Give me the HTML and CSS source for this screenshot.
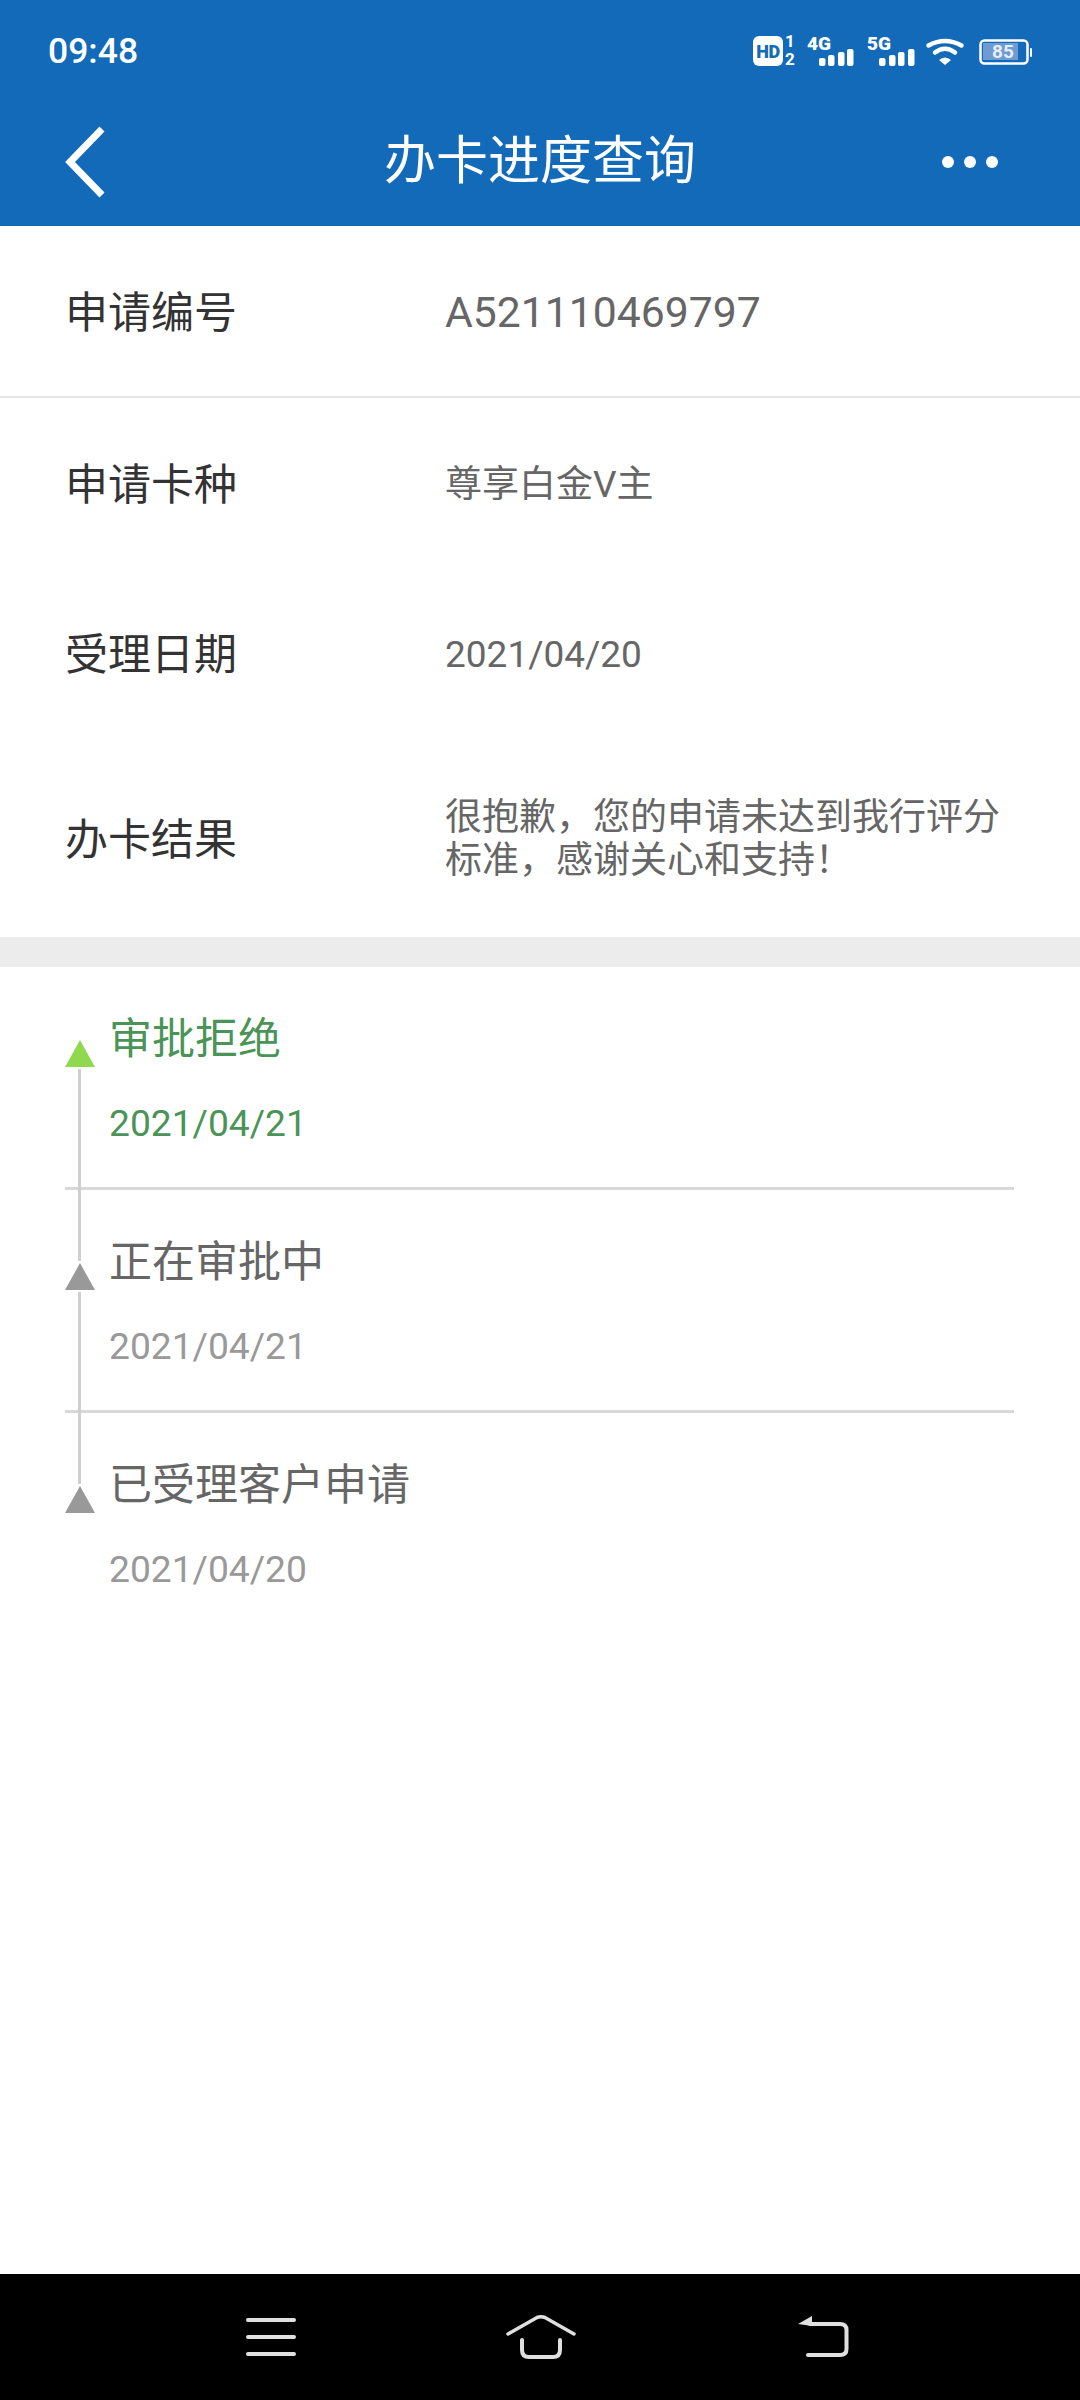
FILE: index.html
```html
<!DOCTYPE html>
<html lang="zh-CN">
<head>
  <meta charset="UTF-8" />
  <meta name="viewport" content="width=device-width, initial-scale=1.0"/>
  <title>办卡进度查询</title>
  <link rel="stylesheet" href="styles.css">
</head>
<body>

<div class="screen">
  <header class="top">
    <div class="status-bar">
      <span class="clock">09:48</span>
      <svg class="status-icons" width="279" height="44" viewBox="0 -10 279 44">
        <!-- HD + sim numbers -->
        <rect x="0" y="0" width="30" height="30" rx="6" fill="#fff"/>
        <text x="15" y="22" class="hd-text">HD</text>
        <text x="37" y="11" class="sim-text">1</text>
        <text x="37" y="29" class="sim-text">2</text>

        <!-- 4G -->
        <text x="54" y="14" class="net-text">4G</text>
        <rect x="66" y="22" width="6.500" height="8" rx="2" fill="#fff"/>
        <rect x="75" y="19" width="6.500" height="11" rx="2" fill="#fff"/>
        <rect x="85" y="16" width="6.500" height="14" rx="2" fill="#fff"/>
        <rect x="94" y="13" width="6.500" height="17" rx="2" fill="#fff"/>

        <!-- 5G -->
        <text x="114" y="14" class="net-text">5G</text>
        <rect x="126" y="22" width="6.500" height="8" rx="2" fill="#fff"/>
        <rect x="136" y="19" width="6.500" height="11" rx="2" fill="#fff"/>
        <rect x="145" y="16" width="6.500" height="14" rx="2" fill="#fff"/>
        <rect x="155" y="13" width="6.500" height="17" rx="2" fill="#fff"/>

        <!-- wifi -->
        <path d="M175.500 9.500 Q192 0.500 208.500 9.500" fill="none" stroke="#fff" stroke-width="4.500" stroke-linecap="round"/>
        <path d="M182 16.500 Q192 9 202 16.500" fill="none" stroke="#fff" stroke-width="4.500" stroke-linecap="round"/>
        <path d="M186 24 Q192 19 198 24 L192 29 Z" fill="#fff"/>

        <!-- battery -->
        <rect x="227.500" y="4.500" width="47" height="23" rx="4" fill="none" stroke="#fff" stroke-width="2.500"/>
        <rect x="230" y="7" width="35" height="17" fill="#6f9bd3"/>
        <rect x="277" y="12" width="2" height="9" rx="1" fill="#fff"/>
        <text x="250" y="22" class="bat-text">85</text>
      </svg>
    </div>
    <div class="nav-bar">
      <svg class="back" width="42" height="72" viewBox="0 0 42 72">
        <path d="M37 3 L5 36 L37 69" fill="none" stroke="#fff" stroke-width="7"/>
      </svg>
      <h1 class="title">办卡进度查询</h1>
      <div class="dots"><i></i><i></i><i></i></div>
    </div>
  </header>

  <section class="info">
    <div class="row row-first">
      <div class="label">申请编号</div>
      <div class="value value-big">A521110469797</div>
    </div>
    <div class="row">
      <div class="label">申请卡种</div>
      <div class="value">尊享白金V主</div>
    </div>
    <div class="row">
      <div class="label">受理日期</div>
      <div class="value">2021/04/20</div>
    </div>
    <div class="row row-last">
      <div class="label">办卡结果</div>
      <div class="value">很抱歉，您的申请未达到我行评分标准，感谢关心和支持！</div>
    </div>
  </section>

  <div class="gap"></div>

  <section class="timeline">
    <div class="step step-active">
      <div class="step-title">审批拒绝</div>
      <div class="step-date">2021/04/21</div>
    </div>
    <div class="step">
      <div class="step-title">正在审批中</div>
      <div class="step-date">2021/04/21</div>
    </div>
    <div class="step step-end">
      <div class="step-title">已受理客户申请</div>
      <div class="step-date">2021/04/20</div>
    </div>
  </section>

  <footer class="sys-nav">
    <svg class="sys-menu" width="50" height="38" viewBox="0 0 50 38">
      <path d="M2 2 H48 M2 19 H48 M2 36 H48" stroke="#e0e0e0" stroke-width="4" stroke-linecap="round"/>
    </svg>
    <svg class="sys-home" width="70" height="44" viewBox="0 0 70 44">
      <path d="M2 19 L31 2.500 Q35 1 39 2.500 L68 19" fill="none" stroke="#e0e0e0" stroke-width="3.500" stroke-linecap="round"/>
      <path d="M16 25 V35 Q16 42 23 42 H47 Q54 42 54 35 V25" fill="none" stroke="#e0e0e0" stroke-width="4" stroke-linecap="round"/>
    </svg>
    <svg class="sys-back" width="51" height="42" viewBox="0 0 51 42">
      <path d="M14 0 V10 L0 8 Z" fill="#e0e0e0"/>
      <path d="M12 8 H42 Q48.500 8 48.500 14 V33 Q48.500 39 42 39 H10" fill="none" stroke="#e0e0e0" stroke-width="4" stroke-linecap="round"/>
    </svg>
  </footer>
</div>

</body>
</html>
```

FILE: styles.css
```css
* {
  box-sizing: border-box;
}

body {
  margin: 0;
  font-family: Roboto, "Noto Sans CJK SC", sans-serif;
  background: #fff;
}

.screen {
  width: 1080px;
  height: 2400px;
  display: flex;
  flex-direction: column;
}

/* header */
.top {
  height: 226px;
  background: #136ab8;
  color: #fff;
}

.status-bar {
  height: 100px;
  padding: 26px 48px 0 48px;
  display: flex;
  justify-content: space-between;
  align-items: flex-start;
}

.clock {
  margin-top: 2px;
  font-size: 35.500px;
  font-weight: 500;
  line-height: 46px;
}

.status-icons {
  display: block;
}

.hd-text {
  font: 900 18px Roboto, sans-serif;
  letter-spacing: -0.500px;
  fill: #136ab8;
  text-anchor: middle;
}

.sim-text {
  font: 700 17px Roboto, sans-serif;
  fill: #fff;
  text-anchor: middle;
}

.net-text {
  font: 900 19px Roboto, sans-serif;
  fill: #fff;
}

.bat-text {
  font: 700 19px Roboto, sans-serif;
  fill: #e8eef7;
  text-anchor: middle;
}

.nav-bar {
  height: 126px;
  padding: 0 66px;
  display: grid;
  grid-template-columns: 1fr auto 1fr;
  align-items: center;
}

.back {
  display: block;
  margin: -2px 0 0 -1px;
}

.title {
  margin: -2px 0 0 0;
  font-size: 52px;
  font-weight: 400;
  line-height: 70px;
}

.dots {
  justify-self: end;
  width: 56px;
  margin-top: -2px;
  margin-right: 16px;
  display: flex;
  justify-content: space-between;
}

.dots i {
  width: 12px;
  height: 12px;
  border-radius: 50%;
  background: #fff;
}

/* info rows */
.row {
  height: 170px;
  padding: 0 66px;
  display: flex;
  align-items: center;
}

.row-first {
  height: 172px;
  border-bottom: 2px solid #e5e5e5;
}

.row-last {
  height: 199px;
}

.label {
  width: 380px;
  flex: none;
  margin-left: -1px;
  padding-bottom: 4px;
  font-size: 43px;
  color: #333;
}

.value {
  width: 560px;
  flex: none;
  padding-top: 2px;
  font-size: 37px;
  line-height: 43px;
  color: #666;
}

.value-big {
  font-size: 42.700px;
}

.gap {
  height: 30px;
  background: #ececec;
}

/* timeline */
.timeline {
  flex: 1;
  padding: 0 66px 0 65px;
}

.step {
  position: relative;
  height: 223px;
  padding: 45px 0 0 44px;
  border-bottom: 3px solid #d8d8d8;
}

.step-end {
  border-bottom: 0;
}

/* triangle marker */
.step::before {
  content: "";
  position: absolute;
  left: 0;
  top: 73px;
  border-left: 15px solid transparent;
  border-right: 15px solid transparent;
  border-bottom: 27px solid #999;
}

/* rail */
.step::after {
  content: "";
  position: absolute;
  left: 13px;
  top: 102px;
  width: 3px;
  height: 192px;
  background: #d0d0d0;
  z-index: 1;
}

.step-end::after {
  display: none;
}

.step-active::before {
  border-bottom-color: #90d94f;
}

.step-title {
  font-size: 43px;
  line-height: 54px;
  color: #666;
}

.step-date {
  margin-top: 35px;
  font-size: 37.200px;
  line-height: 44px;
  color: #999;
}

.step-active .step-title,
.step-active .step-date {
  color: #4a9457;
}

/* system buttons */
.sys-nav {
  height: 126px;
  background: #000;
  display: grid;
  grid-template-columns: 246px 50px 210px 70px 222px 51px;
  align-items: center;
}

.sys-menu {
  grid-column: 2;
}

.sys-home {
  grid-column: 4;
}

.sys-back {
  grid-column: 6;
}
```
